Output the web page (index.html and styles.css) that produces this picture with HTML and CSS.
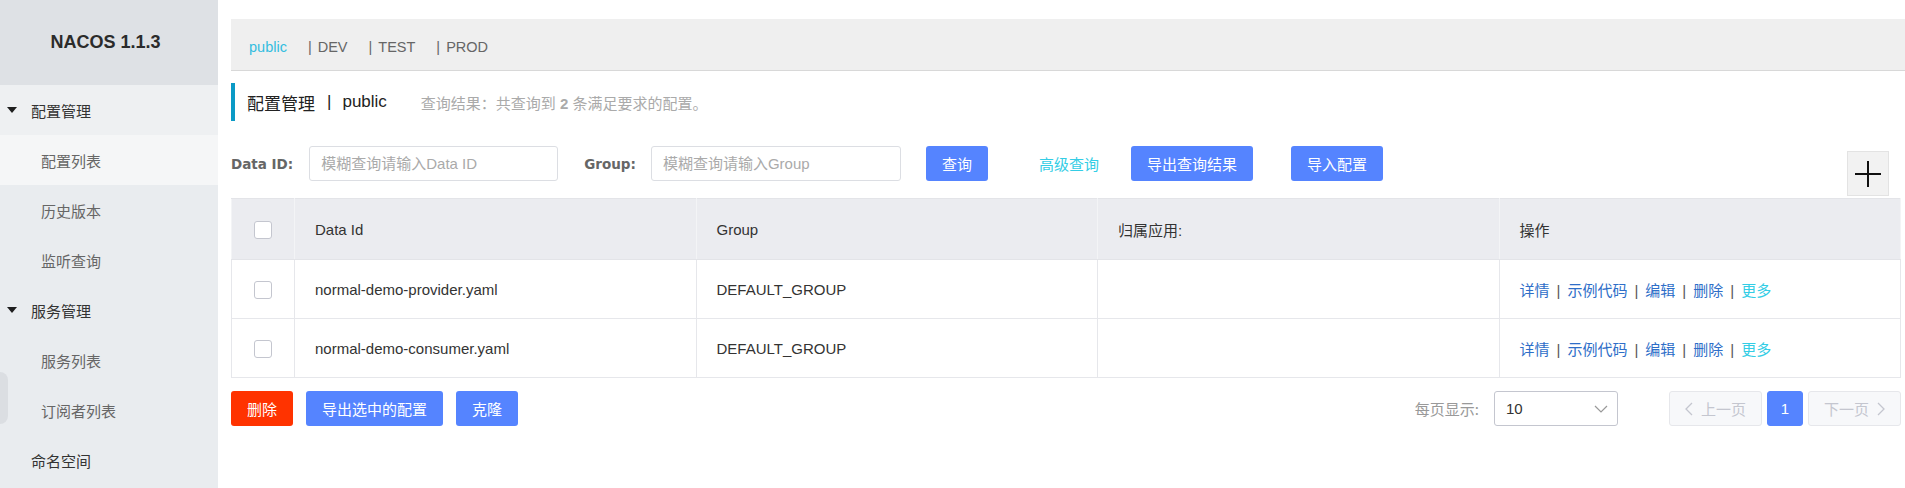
FILE: index.html
```html
<!DOCTYPE html>
<html lang="zh-CN">
<head>
<meta charset="utf-8">
<title>Nacos</title>
<link rel="stylesheet" href="styles.css">
</head>
<body>
<div class="app">
  <aside class="sidebar">
    <div class="brand">NACOS 1.1.3</div>
    <ul class="menu">
      <li class="group open"><span class="caret"></span>配置管理</li>
      <li class="sub active">配置列表</li>
      <li class="sub">历史版本</li>
      <li class="sub">监听查询</li>
      <li class="group"><span class="caret"></span>服务管理</li>
      <li class="sub">服务列表</li>
      <li class="sub">订阅者列表</li>
      <li class="item">命名空间</li>
    </ul>
    <div class="handle"></div>
  </aside>
  <main class="main">
    <div class="ns-bar">
      <span class="ns active">public</span>
      <span class="ns"><span class="ns-sep">|</span>DEV</span>
      <span class="ns"><span class="ns-sep">|</span>TEST</span>
      <span class="ns"><span class="ns-sep">|</span>PROD</span>
    </div>
    <div class="content">
      <div class="title-row">
        <h1 class="title">配置管理<span class="title-sep">|</span>public</h1>
        <span class="info">查询结果：共查询到 <strong>2</strong> 条满足要求的配置。</span>
      </div>
      <div class="search-row">
        <label class="field-label">Data ID:</label>
        <input class="field-input" type="text" placeholder="模糊查询请输入Data ID">
        <label class="field-label gap-left">Group:</label>
        <input class="field-input group-input" type="text" placeholder="模糊查询请输入Group">
        <button class="btn query">查询</button>
        <span class="link adv">高级查询</span>
        <button class="btn export">导出查询结果</button>
        <button class="btn import">导入配置</button>
        <button class="plus" aria-label="add">
          <svg width="26" height="26" viewBox="0 0 26 26"><path d="M13 0V26M0 13H26" stroke="#111" stroke-width="2" fill="none"/></svg>
        </button>
      </div>
      <table class="table">
        <colgroup>
          <col class="c-check">
          <col class="c-wide">
          <col class="c-wide">
          <col class="c-wide">
          <col class="c-wide">
        </colgroup>
        <thead>
          <tr>
            <th class="check-cell"><span class="checkbox"></span></th>
            <th>Data Id</th>
            <th>Group</th>
            <th>归属应用:</th>
            <th>操作</th>
          </tr>
        </thead>
        <tbody>
          <tr>
            <td class="check-cell"><span class="checkbox"></span></td>
            <td>normal-demo-provider.yaml</td>
            <td>DEFAULT_GROUP</td>
            <td></td>
            <td class="actions"><span class="act">详情</span><span class="sep">|</span><span class="act">示例代码</span><span class="sep">|</span><span class="act">编辑</span><span class="sep">|</span><span class="act">删除</span><span class="sep">|</span><span class="more">更多</span></td>
          </tr>
          <tr>
            <td class="check-cell"><span class="checkbox"></span></td>
            <td>normal-demo-consumer.yaml</td>
            <td>DEFAULT_GROUP</td>
            <td></td>
            <td class="actions"><span class="act">详情</span><span class="sep">|</span><span class="act">示例代码</span><span class="sep">|</span><span class="act">编辑</span><span class="sep">|</span><span class="act">删除</span><span class="sep">|</span><span class="more">更多</span></td>
          </tr>
        </tbody>
      </table>
      <div class="footer-row">
        <div class="bulk">
          <button class="btn danger">删除</button>
          <button class="btn">导出选中的配置</button>
          <button class="btn">克隆</button>
        </div>
        <div class="pager">
          <span class="pager-label">每页显示:</span>
          <div class="select"><span>10</span>
            <svg width="14" height="8" viewBox="0 0 14 8"><path d="M1 1L7 7L13 1" stroke="#999" stroke-width="1.2" fill="none"/></svg>
          </div>
          <div class="pages">
            <span class="page-btn"><svg class="chev" width="8" height="14" viewBox="0 0 8 14"><path d="M7 1L1 7L7 13" stroke="#c4c6cf" stroke-width="1.3" fill="none"/></svg>上一页</span>
            <span class="page-btn current">1</span>
            <span class="page-btn">下一页<svg class="chev right" width="8" height="14" viewBox="0 0 8 14"><path d="M1 1L7 7L1 13" stroke="#c4c6cf" stroke-width="1.3" fill="none"/></svg></span>
          </div>
        </div>
      </div>
    </div>
  </main>
</div>
</body>
</html>
```

FILE: styles.css
```css
* { box-sizing: border-box; margin: 0; padding: 0; }
html, body { height: 100%; }
body {
  font-family: "Liberation Sans", "Noto Sans CJK SC", sans-serif;
  font-size: 15px;
  color: #333;
  background: #fff;
}
.app { display: flex; min-height: 100vh; }

/* sidebar */
.sidebar { width: 218px; flex: none; background: #e9ecef; position: relative; }
.brand {
  height: 85px; display: flex; align-items: center; justify-content: center;
  background: #dee1e5; font-weight: bold; font-size: 18px; color: #2b2b2b;
  padding-right: 7px;
}
.menu { list-style: none; }
.menu li {
  height: 50px; display: flex; align-items: center; font-size: 15px;
  font-family: "Noto Sans CJK SC", sans-serif;
}
.group { padding-left: 7px; color: #333; }
.group.open { background: #eef0f2; }
.caret {
  width: 0; height: 0; border-left: 5px solid transparent; border-right: 5px solid transparent;
  border-top: 6px solid #1e1e1e; margin-right: 14px;
}
.sub { padding-left: 41px; color: #666; }
.sub.active { background: #f5f6f7; }
.item { padding-left: 31px; color: #333; }
.handle {
  position: absolute; left: 0; top: 372px; width: 8px; height: 52px;
  background: #dbdee2; border-radius: 0 8px 8px 0;
}

/* main */
.main { flex: 1; min-width: 0; padding: 19px 0 0 13px; }
.ns-bar {
  height: 52px; background: #efefef; border-bottom: 1px solid #d8d8d8;
  display: flex; align-items: center; padding: 5px 0 0 18px; font-size: 14.5px; color: #666;
}
.ns { margin-right: 21px; }
.ns.active { color: #33bde0; }
.ns-sep { margin-right: 6px; }

.content { padding-right: 4px; }
.title-row { margin-top: 12px; height: 38px; display: flex; align-items: center; }
.title {
  height: 38px; border-left: 4px solid #0b9ac6; padding-left: 12px;
  font-size: 17px; font-weight: normal; color: #222; display: flex; align-items: center;
}
.title-sep { margin: 0 11px 0 12px; font-weight: 300; }
.info { margin-left: 34px; color: #aaa; font-size: 15px; }
.info strong { font-weight: bold; color: #aaa; }

.search-row { display: flex; align-items: flex-start; margin-top: 25px; height: 50px; }
.field-label {
  font-family: "DejaVu Sans", sans-serif; font-weight: bold; font-size: 13.5px; color: #666;
  height: 35px; line-height: 36px; margin-right: 16px;
}
.field-label.gap-left { margin-left: 26px; margin-right: 15px; }
.field-input {
  width: 249px; height: 35px; border: 1px solid #dcdee3; border-radius: 3px;
  padding: 0 11px; font-size: 15px; font-family: "Liberation Sans", "Noto Sans CJK SC", sans-serif;
  color: #333; background: #fff; outline: none;
}
.field-input::placeholder { color: #aaa; }
.group-input { width: 250px; }
.btn {
  height: 35px; padding: 0 16px; border: none; border-radius: 3px; background: #5584ff;
  color: #fff; font-size: 15px; font-family: "Noto Sans CJK SC", sans-serif; cursor: pointer;
}
.btn.danger { background: #ff3300; }
.query { margin-left: 25px; }
.link { height: 35px; line-height: 35px; color: #33cde5; font-family: "Noto Sans CJK SC", sans-serif; }
.adv { margin-left: 51px; }
.export { margin-left: 32px; }
.import { margin-left: 38px; }
.plus {
  margin-left: auto; margin-right: 12px; margin-top: 5px; width: 42px; height: 45px;
  background: #f2f2f2; border: 1px solid #e3e3e3; display: flex; align-items: center; justify-content: center;
}

/* table */
.table { width: 100%; border-collapse: collapse; table-layout: fixed; margin-top: 2px; }
.c-check { width: 63px; }
.table th, .table td {
  border: 1px solid #e6e7eb; text-align: left; padding: 0 0 0 20px;
  font-weight: normal; font-size: 15px; color: #333;
}
.table thead th { height: 61px; background: #ebecf0; border-color: #e3e4e8 #f3f4f6; }
.table td { height: 59px; }
.table .check-cell { padding: 0; text-align: center; }
.checkbox {
  display: inline-block; width: 18px; height: 18px; border: 1px solid #c4c6cf;
  border-radius: 3px; background: #fff; vertical-align: middle;
}
.act { color: #2e6ec8; }
.more { color: #33cde5; }
.sep { margin: 0 7px; color: #555; }

/* footer */
.footer-row { display: flex; align-items: center; margin-top: 13px; }
.bulk { display: flex; gap: 13px; }
.pager { margin-left: auto; display: flex; align-items: center; }
.pager-label { color: #999; margin-right: 15px; font-family: "Noto Sans CJK SC", sans-serif; }
.select {
  width: 124px; height: 35px; border: 1px solid #c4c6cf; border-radius: 3px;
  display: flex; align-items: center; justify-content: space-between; padding: 0 9px 0 11px; color: #333;
}
.pages { display: flex; gap: 5px; margin-left: 51px; }
.page-btn {
  height: 35px; border: 1px solid #e6e7eb; background: #f7f8fa; color: #c4c6cf;
  display: flex; align-items: center; padding: 0 15px; border-radius: 3px;
  font-family: "Noto Sans CJK SC", sans-serif;
}
.chev { margin-right: 8px; }
.chev.right { margin: 0 0 0 8px; }
.page-btn.current {
  width: 36px; padding: 0; justify-content: center; background: #5584ff; border-color: #5584ff;
  color: #fff; font-family: "Liberation Sans", sans-serif;
}
```
